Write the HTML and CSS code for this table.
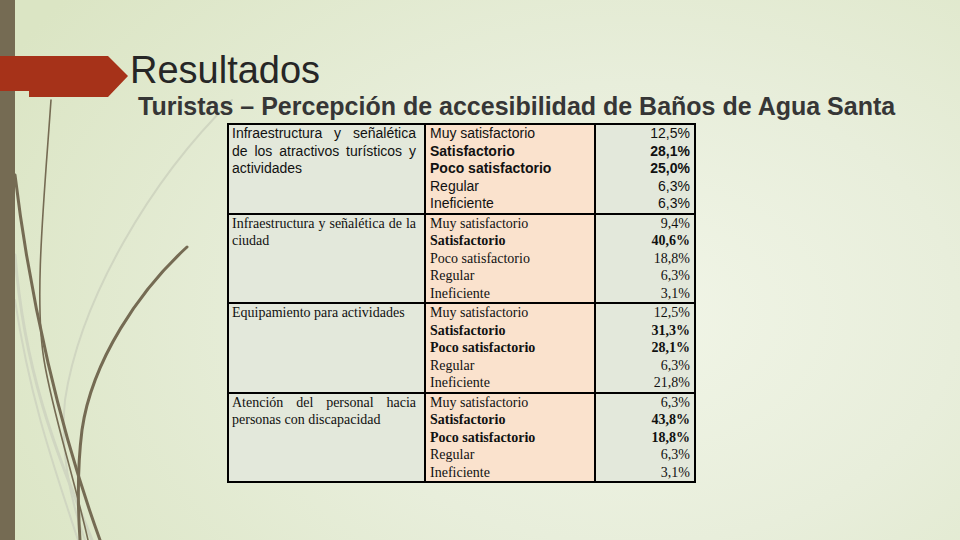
FILE: index.html
```html
<!DOCTYPE html>
<html lang="es">
<head>
<meta charset="utf-8">
<title>Resultados</title>
<link rel="stylesheet" href="styles.css">
</head>
<body>
<div class="slide">
  <svg class="deco" width="260" height="540" viewBox="0 0 260 540" aria-hidden="true">
    <path d="M232,100 C150,180 80,300 65,400 C60,450 70,500 85,540" class="light" stroke-width="2"/>
    <path d="M15,255 C25,380 60,460 92,540" class="light" stroke-width="3"/>
    <path d="M15,300 C30,400 55,470 78,540" class="light" stroke-width="2"/>
    <path d="M51,100 C44,200 34,300 44,360 C52,410 72,470 88,540" class="dark" stroke-width="1.6"/>
    <path d="M15,175 C30,300 60,430 100,540" class="dark" stroke-width="3"/>
    <path d="M187,247 C140,290 92,360 82,430 C77,470 78,510 80,540" class="dark" stroke-width="3"/>
  </svg>
  <div class="bar"></div>
  <svg class="arrow" width="130" height="42" viewBox="0 0 130 42" aria-hidden="true">
    <polygon points="0,0 108,0 128,20 108,41 29,41 29,35 0,35" fill="#a63219"/>
  </svg>
  <main class="content">
    <h1 class="title">Resultados</h1>
    <h2 class="subtitle">Turistas – Percepción de accesibilidad de Baños de Agua Santa</h2>
    <div class="table">
      <div class="sec sans">
        <div class="c1">Infraestructura y señalética de los atractivos turísticos y actividades</div>
        <div class="c2"><div>Muy satisfactorio</div><div class="b">Satisfactorio</div><div class="b">Poco satisfactorio</div><div>Regular</div><div>Ineficiente</div></div>
        <div class="c3"><div>12,5%</div><div class="b">28,1%</div><div class="b">25,0%</div><div>6,3%</div><div>6,3%</div></div>
      </div>
      <div class="sec serif">
        <div class="c1">Infraestructura y señalética de la ciudad</div>
        <div class="c2"><div>Muy satisfactorio</div><div class="b">Satisfactorio</div><div>Poco satisfactorio</div><div>Regular</div><div>Ineficiente</div></div>
        <div class="c3"><div>9,4%</div><div class="b">40,6%</div><div>18,8%</div><div>6,3%</div><div>3,1%</div></div>
      </div>
      <div class="sec serif">
        <div class="c1">Equipamiento para actividades</div>
        <div class="c2"><div>Muy satisfactorio</div><div class="b">Satisfactorio</div><div class="b">Poco satisfactorio</div><div>Regular</div><div>Ineficiente</div></div>
        <div class="c3"><div>12,5%</div><div class="b">31,3%</div><div class="b">28,1%</div><div>6,3%</div><div>21,8%</div></div>
      </div>
      <div class="sec serif">
        <div class="c1">Atención del personal hacia personas con discapacidad</div>
        <div class="c2"><div>Muy satisfactorio</div><div class="b">Satisfactorio</div><div class="b">Poco satisfactorio</div><div>Regular</div><div>Ineficiente</div></div>
        <div class="c3"><div>6,3%</div><div class="b">43,8%</div><div class="b">18,8%</div><div>6,3%</div><div>3,1%</div></div>
      </div>
    </div>
  </main>
</div>
</body>
</html>
```
FILE: styles.css
```css
html, body {
  margin: 0;
  padding: 0;
}
body {
  width: 960px;
  height: 540px;
  overflow: hidden;
  font-family: "Liberation Sans", Arial, sans-serif;
}
.slide {
  position: relative;
  width: 960px;
  height: 540px;
  display: flex;
  overflow: hidden;
  background: radial-gradient(ellipse 75% 95% at 66% 58%, #f1f5e7 0%, #e8eedb 45%, #dbe5c4 100%);
}
.deco {
  position: absolute;
  left: 0;
  top: 0;
  fill: none;
}
.deco .dark { stroke: #756b53; fill: none; stroke-linecap: round; }
.deco .light { stroke: #d0d6c1; fill: none; stroke-linecap: round; }
.bar {
  flex: none;
  width: 15px;
  height: 540px;
  background: #756b53;
  position: relative;
}
.arrow {
  position: absolute;
  left: 0;
  top: 56px;
}
.content {
  position: relative;
  padding: 50px 0 0 115px;
  display: flex;
  flex-direction: column;
  align-items: flex-start;
}
.title {
  margin: 0;
  font-family: "Liberation Sans", Arial, sans-serif;
  font-weight: normal;
  font-size: 38px;
  line-height: 40px;
  color: #262626;
}
.subtitle {
  margin: 2px 0 0 8px;
  font-family: "Liberation Sans", Arial, sans-serif;
  font-weight: bold;
  font-size: 25px;
  line-height: 28px;
  color: #363636;
  white-space: nowrap;
}
.table {
  margin: 3px 0 0 97px;
  width: 469px;
  box-sizing: border-box;
  border: 2px solid #000;
  color: #111;
}
.sec {
  display: grid;
  grid-template-columns: 197px 170px 98px;
  height: 87.5px;
  font-size: 14px;
  line-height: 17.5px;
}
.sec + .sec {
  border-top: 2px solid #000;
}
.sans { font-family: "Liberation Sans", Arial, sans-serif; }
.serif { font-family: "Liberation Serif", "Times New Roman", serif; }
.c1, .c2, .c3 {
  box-sizing: border-box;
}
.c1 {
  background: #e3e8db;
  border-right: 2px solid #000;
  padding: 0 8px 0 3px;
  text-align: justify;
}
.c2 {
  background: #fae2cd;
  border-right: 2px solid #000;
  padding: 0 0 0 4px;
  white-space: nowrap;
}
.c3 {
  background: #e3e8db;
  padding: 0 4px 0 0;
  text-align: right;
}
.b { font-weight: bold; }
```
